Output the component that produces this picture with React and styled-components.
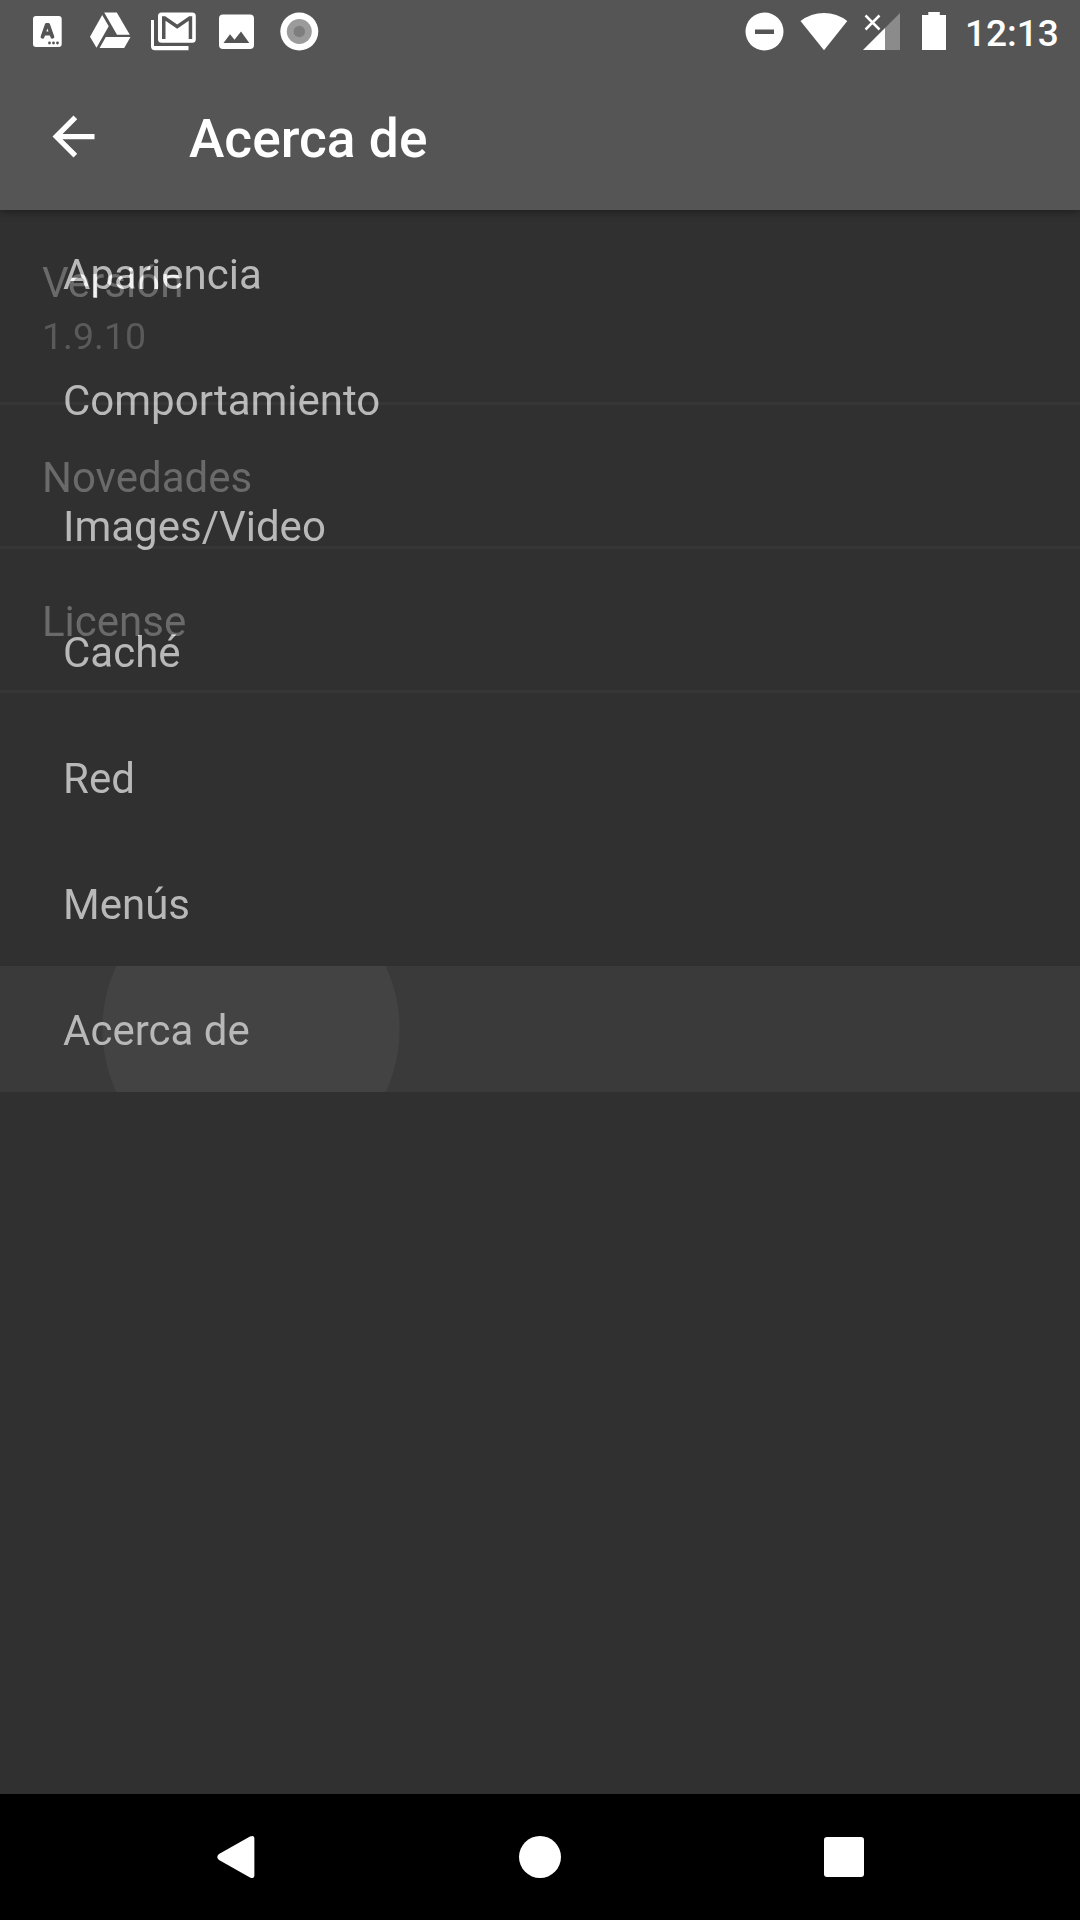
import React from 'react';
import styled, { createGlobalStyle } from 'styled-components';

const GlobalStyle = createGlobalStyle`
  * { box-sizing: border-box; }
  body { margin: 0; background: #303030; }
`;

const Screen = styled.div`
  display: flex;
  flex-direction: column;
  width: 1080px;
  height: 1920px;
  overflow: hidden;
  background: #303030;
  color: #fff;
  font-family: Roboto, "Noto Sans", sans-serif;
`;

const Header = styled.header`
  position: relative;
  z-index: 1;
  background: #555555;
  box-shadow: 0 2px 8px rgba(0, 0, 0, 0.4);
`;

const StatusBar = styled.div`
  display: flex;
  align-items: center;
  justify-content: space-between;
  height: 63px;
`;

const Notifications = styled.svg`
  display: block;
  width: 340px;
  height: 63px;
`;

const SystemStatus = styled.div`
  display: flex;
  align-items: center;
  padding-right: 20px;
`;

const SystemIcons = styled.svg`
  display: block;
  width: 225px;
  height: 63px;
`;

const Clock = styled.span`
  width: 95px;
  padding-top: 4px;
  font-size: 37px;
  line-height: 44px;
  font-weight: 500;
  white-space: nowrap;
`;

const Toolbar = styled.div`
  display: flex;
  align-items: center;
  height: 147px;
`;

const BackButton = styled.button`
  display: flex;
  width: 147px;
  height: 147px;
  padding: 42px;
  border: 0;
  background: none;
  color: #fff;
`;

const Title = styled.h1`
  margin: 0;
  padding: 4px 0 0 42px;
  font-size: 53.3px;
  line-height: 62px;
  font-weight: 500;
`;

const Content = styled.main`
  display: grid;
  flex: 1;
  isolation: isolate;
  background: #303030;
`;

const Preferences = styled.section`
  grid-area: 1 / 1;
`;

const Preference = styled.div`
  height: ${({ $tall }) => ($tall ? 195 : 144)}px;
  padding: 48px 42px 0;
  border-bottom: 3px solid #363636;
`;

const PreferenceTitle = styled.div`
  color: #6a6a6a;
  font-size: 42px;
  line-height: 50px;
`;

const PreferenceSummary = styled.div`
  padding-top: 6px;
  color: #5a5a5a;
  font-size: 37.5px;
  line-height: 44px;
`;

const Menu = styled.nav`
  grid-area: 1 / 1;
  mix-blend-mode: plus-lighter;
`;

const MenuItem = styled.div`
  display: flex;
  align-items: center;
  height: 126px;
  padding: 3px 63px 0;
  font-size: 42px;
  line-height: 50px;
  color: #888888;
  background: ${({ $pressed }) =>
    $pressed
      ? 'radial-gradient(circle at 251px 63px, #131313 148px, #0a0a0a 149px)'
      : 'none'};
`;

const NavigationBar = styled.footer`
  display: flex;
  justify-content: center;
  height: 126px;
  background: #000;
`;

const NavigationIcons = styled.svg`
  display: block;
  width: 1080px;
  height: 126px;
`;

const preferences = [
  { title: 'Versión', summary: '1.9.10' },
  { title: 'Novedades' },
  { title: 'License' },
];

const sections = [
  'Apariencia',
  'Comportamiento',
  'Images/Video',
  'Caché',
  'Red',
  'Menús',
  'Acerca de',
];

function NotificationIcons() {
  return (
    <Notifications viewBox="0 0 340 63" fill="#fff">
      <rect x="33" y="16" width="28.7" height="31" rx="3" />
      <g fill="none" stroke="#555" strokeWidth="3.8" strokeLinecap="round" strokeLinejoin="round">
        <path d="M42.5 36.800L46.600 25h1.600L52.400 36.800M44.500 33.500h6" />
      </g>
      <g fill="#555">
        <circle cx="49.5" cy="43" r="1.4" />
        <circle cx="53.5" cy="43" r="1.4" />
        <circle cx="57.5" cy="43" r="1.4" />
      </g>
      <path d="M102.2 15L108.7 26.3 96.5 47.8 90 36.8zM104.2 12.5h12.6l13 22.3H117zM105.8 37h24.7l-6.3 11H99.6z" />
      <path d="M151 20h3v26h34.5v4.300H155q-4 0-4-4z" />
      <rect x="158" y="12.5" width="37.8" height="30.3" rx="3.5" />
      <path d="M162 39V16.200h3.200l12 8.200 12-8.200h3V39h-3.500V20.800l-11.500 8-11.700-8V39z" fill="#555" />
      <path d="M223 14.500h27q4 0 4 4V45q0 4-4 4h-27q-4 0-4-4V18.500q0-4 4-4zM223.500 43h25.800l-8.300-11.500-6.500 8.200-4.500-5.500z" fillRule="evenodd" />
      <circle cx="299.3" cy="31.500" r="19" />
      <circle cx="299.3" cy="31.500" r="12.500" fill="#9b9b9b" />
      <circle cx="299.3" cy="31.500" r="5.700" fill="#7e7e7e" />
    </Notifications>
  );
}

function StatusIcons() {
  return (
    <SystemIcons viewBox="740 0 225 63" fill="#fff">
      <circle cx="764.500" cy="31.500" r="19" />
      <path d="M755 29.500h19v4.500h-19z" fill="#555" />
      <path d="M800.500 21q10.500-8 23.500-8t23.300 8L824 50.300z" />
      <path d="M900 13v37h-15V28z" fill="#8b8b8b" />
      <path d="M885 28v22h-22z" />
      <path d="M865.500 15.500l14 14M879.500 15.500l-14 14" stroke="#fff" strokeWidth="2.500" />
      <path d="M928.300 12h11.500v3h6.200v35h-24V15h6.300z" />
    </SystemIcons>
  );
}

export default function App() {
  return (
    <>
      <GlobalStyle />
      <Screen>
        <Header>
          <StatusBar>
            <NotificationIcons />
            <SystemStatus>
              <StatusIcons />
              <Clock>12:13</Clock>
            </SystemStatus>
          </StatusBar>
          <Toolbar>
            <BackButton aria-label="Atrás">
              <svg width="63" height="63" viewBox="0 0 24 24" fill="currentColor">
                <path d="M20 11H7.830l5.590-5.590L12 4l-8 8 8 8 1.410-1.410L7.830 13H20v-2z" />
              </svg>
            </BackButton>
            <Title>Acerca de</Title>
          </Toolbar>
        </Header>
        <Content>
          <Preferences>
            {preferences.map(({ title, summary }) => (
              <Preference key={title} $tall={Boolean(summary)}>
                <PreferenceTitle>{title}</PreferenceTitle>
                {summary && <PreferenceSummary>{summary}</PreferenceSummary>}
              </Preference>
            ))}
          </Preferences>
          <Menu>
            {sections.map((name) => (
              <MenuItem key={name} $pressed={name === 'Acerca de'}>
                {name}
              </MenuItem>
            ))}
          </Menu>
        </Content>
        <NavigationBar>
          <NavigationIcons viewBox="0 0 1080 126" fill="#fff">
            <path d="M250 42.600q4.400-2 4.400 2.400v36q0 4.400-4.400 2.400L219 66q-3.500-3 0-6z" />
            <circle cx="540" cy="63" r="21" />
            <rect x="824" y="43" width="40" height="40" rx="3" />
          </NavigationIcons>
        </NavigationBar>
      </Screen>
    </>
  );
}
